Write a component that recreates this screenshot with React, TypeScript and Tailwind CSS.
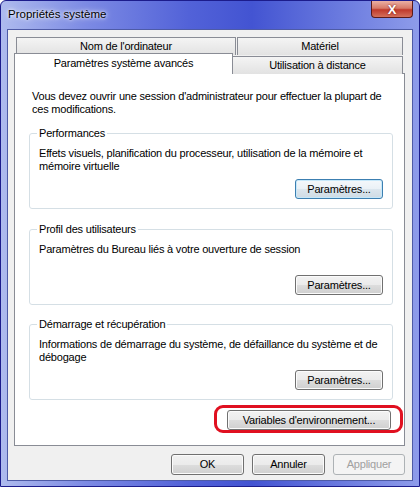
import React from "react";

const txt = "text-[11px] tracking-[-0.2px] whitespace-nowrap";

const btn =
  "h-[20px] rounded-[3px] border border-[#707070] bg-[linear-gradient(#f2f2f2_0%,#ebebeb_50%,#dddddd_51%,#cfcfcf_100%)] shadow-[inset_0_0_0_1px_#fbfbfb] leading-[13px] text-black flex items-center justify-center " +
  txt;

function Group({
  title,
  lines,
  focused,
}: {
  title: string;
  lines: string[];
  focused?: boolean;
}) {
  return (
    <fieldset className="min-w-0 mx-[14px] mr-[11px] rounded-[3px] border border-[#d5dfe5] px-[9px] pt-[7px] pb-[9px]">
      <legend className={"-ml-[2px] px-[2px] leading-[14px] text-black " + txt}>{title}</legend>
      <div className={"h-[26px] leading-[13px] text-black " + txt}>
        {lines.map((l) => (
          <div key={l}>{l}</div>
        ))}
      </div>
      <div className="mt-[6px] flex justify-end">
        <button
          className={
            focused
              ? "h-[20px] w-[88px] rounded-[3px] border border-[#3c7fb1] bg-[linear-gradient(#f4f8fb_0%,#eaf1f6_50%,#dbe6ee_51%,#cfdbe4_100%)] shadow-[inset_0_0_0_1px_#c6e8fa] leading-[13px] text-black flex items-center justify-center " +
                txt
              : btn + " w-[88px]"
          }
        >
          Paramètres...
        </button>
      </div>
    </fieldset>
  );
}

export default function App() {
  return (
    <div className="w-[420px] h-[487px] font-['Liberation_Sans',Arial,sans-serif] border border-[#1c1c8c] rounded-t-[6px] bg-[linear-gradient(90deg,#aebbee_0%,#7d8be4_20%,#5262d8_45%,#4354d2_60%,#6878de_80%,#8e9cea_100%)] flex flex-col overflow-hidden">
      <div className="h-[28px] flex items-start justify-between shrink-0">
        <div className="ml-[7px] mt-[6px] leading-[15px] text-black [text-shadow:0_0_6px_#ffffff,0_0_3px_#ffffff] text-[11.5px] whitespace-nowrap">
          Propriétés système
        </div>
        <div className="mr-[6px] w-[42px] h-[17px] rounded-b-[4px] border border-[#5a1a1a] border-t-0 bg-[linear-gradient(#eab0a4_0%,#d77a68_45%,#c0392b_55%,#d4705c_100%)] flex items-center justify-center text-white text-[13px] font-bold leading-none [text-shadow:0_0_2px_#6a1010]">
          X
        </div>
      </div>
      <div className="mx-[6px] mb-[5px] flex-1 border border-[#4e5ba6] bg-[#f0f0f0] flex flex-col">
        {/* tab row 1 */}
        <div className="mt-[7px] ml-[8px] flex gap-[1px] h-[18px]">
          <div className={"w-[220px] border border-b-0 border-[#898c95] bg-[linear-gradient(#f4f4f4,#e2e2e2)] leading-[16px] text-center text-black " + txt}>
            Nom de l'ordinateur
          </div>
          <div className={"w-[166px] border border-b-0 border-[#898c95] bg-[linear-gradient(#f4f4f4,#e2e2e2)] leading-[16px] text-center text-black " + txt}>
            Matériel
          </div>
        </div>
        {/* tab row 2 */}
        <div className="-mt-[2px] ml-[6px] flex items-end relative z-10 -mb-[1px]">
          <div className={"w-[219px] h-[21px] border border-b-0 border-[#898c95] bg-white leading-[16px] text-center text-black pt-[1px] " + txt}>
            Paramètres système avancés
          </div>
          <div className={"w-[170px] h-[18px] border border-l-0 border-b-0 border-[#898c95] bg-[linear-gradient(#f4f4f4,#e2e2e2)] leading-[17px] text-center text-black " + txt}>
            Utilisation à distance
          </div>
        </div>
        {/* panel */}
        <div className="ml-[6px] mr-[7px] h-[373px] border border-[#898c95] bg-white flex flex-col">
          <div className={"mt-[16px] px-[17px] leading-[13px] text-black " + txt}>
            <div>Vous devez ouvrir une session d'administrateur pour effectuer la plupart de</div>
            <div>ces modifications.</div>
          </div>
          <div className="mt-[10px]">
            <Group
              title="Performances"
              focused
              lines={[
                "Effets visuels, planification du processeur, utilisation de la mémoire et",
                "mémoire virtuelle",
              ]}
            />
          </div>
          <div className="mt-[13px]">
            <Group title="Profil des utilisateurs" lines={["Paramètres du Bureau liés à votre ouverture de session"]} />
          </div>
          <div className="mt-[12px]">
            <Group
              title="Démarrage et récupération"
              lines={[
                "Informations de démarrage du système, de défaillance du système et de",
                "débogage",
              ]}
            />
          </div>
          <div className="mt-[10px] mr-[13px] flex justify-end">
            <div className="relative">
              <button className={btn + " w-[164px]"}>Variables d'environnement...</button>
              <div className="absolute -left-[13px] -right-[12px] -top-[5px] -bottom-[3px] rounded-[9px] border-[3px] border-[#e01020] pointer-events-none" />
            </div>
          </div>
        </div>
        {/* bottom buttons */}
        <div className="mt-[8px] mr-[7px] flex justify-end gap-[8px]">
          <button className={btn + " w-[73px] h-[21px]"}>OK</button>
          <button className={btn + " w-[73px] h-[21px]"}>Annuler</button>
          <button className={"w-[72px] h-[21px] rounded-[3px] border border-[#adb2b5] bg-[#f4f4f4] leading-[13px] text-[#a0a0a0] flex items-center justify-center " + txt}>
            Appliquer
          </button>
        </div>
      </div>
    </div>
  );
}
